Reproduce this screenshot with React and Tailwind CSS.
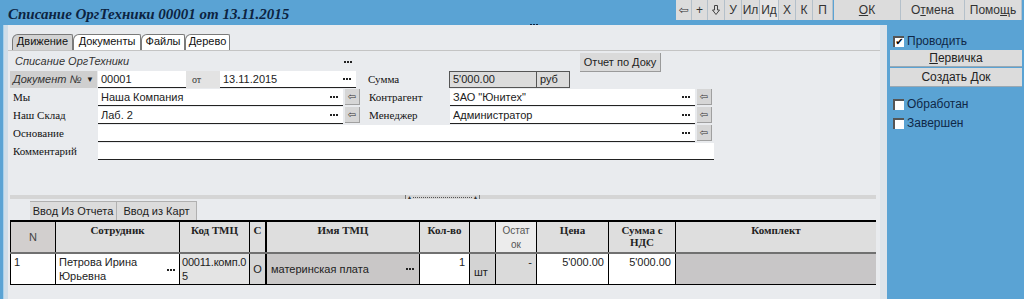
import React from "react";

function Dots() {
  return (
    <span className="inline-flex gap-[1px] items-center">
      <span className="w-[2px] h-[2px] bg-[#222]" />
      <span className="w-[2px] h-[2px] bg-[#222]" />
      <span className="w-[2px] h-[2px] bg-[#222]" />
    </span>
  );
}

function ArrBtn() {
  return (
    <div className="w-[15px] h-[16px] bg-[#d6d6d6] border-r border-b border-[#a0a0a0] flex items-center justify-center text-[10px] leading-none text-[#333] font-['DejaVu_Sans',sans-serif]">
      ⇦
    </div>
  );
}

function Field({ className = "", text = "", dots = false }) {
  return (
    <div className={`h-[17px] bg-white border-b border-[#222] flex items-center pl-[3px] pr-[5px] text-[11px] text-[#222] ${className}`}>
      <span className="flex-1 truncate">{text}</span>
      {dots && <Dots />}
    </div>
  );
}

function Label({ children, className = "" }) {
  return (
    <div className={`h-[17px] flex items-center pl-[3px] font-['Liberation_Serif','Times_New_Roman',serif] text-[11px] text-[#111] ${className}`}>
      {children}
    </div>
  );
}

function Tab({ children, active, className = "" }) {
  return (
    <div
      className={`h-[16px] flex items-end justify-center pb-[1px] text-[11px] text-[#111] border-l border-t border-r border-[#7a7a7a] rounded-tl-[6px] rounded-tr-[2px] ${active ? "bg-[#d3d3d3]" : "bg-white"} ${className}`}
    >
      {children}
    </div>
  );
}

function Check({ checked, label }) {
  return (
    <div className="flex items-center h-[14px] pl-[6px]">
      <div className="w-[11px] h-[11px] bg-white border-l-2 border-t-2 border-[#555] flex items-center justify-center text-[10px] leading-none text-black font-['DejaVu_Sans',sans-serif]">
        {checked ? "✔" : ""}
      </div>
      <span className="ml-[3px] text-[12px] text-[#0f2848]">{label}</span>
    </div>
  );
}

function TB({ children, className = "" }) {
  return (
    <div className={`h-[20px] bg-[#dcdcdc] border-r border-[#b4c0ca] flex items-center justify-center text-[12px] text-[#333] ${className}`}>
      {children}
    </div>
  );
}

function HCell({ children, className = "" }) {
  return (
    <div className={`h-[30px] border-r border-black flex justify-center pt-[2px] font-['Liberation_Serif','Times_New_Roman',serif] font-bold text-[11px] leading-[12px] text-[#222] text-center ${className}`}>
      {children}
    </div>
  );
}

function DCell({ children, className = "" }) {
  return (
    <div className={`h-[30px] border-r border-black text-[11px] leading-[14px] text-[#222] ${className}`}>
      {children}
    </div>
  );
}

export default function App() {
  return (
    <div className="w-[1024px] h-[299px] bg-[#5aa3d4] flex flex-col overflow-hidden font-['Liberation_Sans',Arial,sans-serif]">
      {/* Title bar */}
      <div className="h-[25px] flex items-start">
        <div className="w-[530px] pl-[8px] pt-[3px] font-['Liberation_Serif','Times_New_Roman',serif] font-bold italic text-[15px] text-[#0c2341] whitespace-nowrap">
          Списание ОргТехники 00001 от 13.11.2015
        </div>
        <div className="pt-[9px] w-[140px]">
          <span className="inline-flex gap-[1px]">
            <span className="w-[2px] h-[2px] bg-[#0c2341]" />
            <span className="w-[2px] h-[2px] bg-[#0c2341]" />
            <span className="w-[2px] h-[2px] bg-[#0c2341]" />
          </span>
        </div>
        <div className="ml-[6px] flex">
          <TB className="w-[16px] text-[10px] font-['DejaVu_Sans',sans-serif]">⇦</TB>
          <TB className="w-[16px]">+</TB>
          <TB className="w-[17px]">
            <svg width="8" height="10" viewBox="0 0 8 10">
              <path d="M2.5 0.5 H5.5 V5 H7.5 L4 9.5 L0.5 5 H2.5 Z" fill="none" stroke="#444" strokeWidth="1" />
            </svg>
          </TB>
          <TB className="w-[17px]">У</TB>
          <TB className="w-[18px]">Ил</TB>
          <TB className="w-[19px] bg-[#e6e6e6]">Ид</TB>
          <TB className="w-[17px]">Х</TB>
          <TB className="w-[17px]">К</TB>
          <TB className="w-[20px]">П</TB>
          <TB className="w-[67px] ml-[1px]"><span><span className="underline">О</span>К</span></TB>
          <TB className="w-[64px]"><span>О<span className="underline">т</span>мена</span></TB>
          <TB className="w-[57px]"><span>Помо<span className="underline">щ</span>ь</span></TB>
        </div>
      </div>

      <div className="flex flex-1">
        {/* left edge */}
        <div className="w-[8px] flex">
          <div className="w-[3px]" />
          <div className="w-[1px] bg-[#a8d0ea]" />
          <div className="flex-1 bg-[#cfdde8]" />
        </div>

        {/* main panel */}
        <div className="w-[872px] bg-[#e9ebee] flex flex-col">
          {/* tabs */}
          <div className="mt-[9px] flex pl-[4px] border-b border-[#c4c4c4] h-[17px]">
            <Tab active className="w-[61px]">Движение</Tab>
            <Tab className="w-[68px]">Документы</Tab>
            <Tab className="w-[44px]">Файлы</Tab>
            <Tab className="w-[45px]">Дерево</Tab>
          </div>

          {/* form */}
          <div className="pl-[2px] flex flex-col">
            {/* row 1 */}
            <div className="mt-[2px] h-[18px] flex items-start">
              <div className="w-[347px] h-[17px] flex items-center pl-[5px] pr-[5px] text-[11px] italic text-[#333]">
                <span className="flex-1">Списание ОргТехники</span>
                <Dots />
              </div>
              <div className="ml-[223px] w-[81px] h-[19px] bg-[#dadada] border-r border-b border-[#9a9a9a] flex items-center justify-center text-[11px] text-[#222]">
                Отчет по Доку
              </div>
            </div>
            {/* row 2 */}
            <div className="h-[18px] flex items-start">
              <div className="w-[87px] h-[17px] bg-[#cfcfcf] flex items-center pl-[3px] pr-[3px] text-[11px] italic text-[#333]">
                <span className="flex-1">Документ №</span>
                <span className="text-[8px] text-[#222]">▼</span>
              </div>
              <Field className="w-[88px] ml-[1px]" text="00001" />
              <div className="w-[34px] h-[17px] bg-[#e3e3e3] flex items-center pl-[6px] font-['Liberation_Serif',serif] text-[10px] text-[#333]">от</div>
              <Field className="w-[136px]" text="13.11.2015" dots />
              <Label className="w-[84px] ml-[9px]">Сумма</Label>
              <div className="w-[88px] h-[17px] bg-[#dcdcdc] border border-[#555] flex items-center pl-[3px] text-[11px] text-[#222]">5'000.00</div>
              <div className="w-[33px] h-[17px] bg-[#dcdcdc] border border-l-0 border-[#555] flex items-center pl-[3px] text-[11px] text-[#222]">руб</div>
            </div>
            {/* row 3 */}
            <div className="h-[18px] flex items-start">
              <Label className="w-[88px]">Мы</Label>
              <Field className="w-[245px]" text="Наша Компания" dots />
              <div className="ml-[2px]"><ArrBtn /></div>
              <Label className="w-[84px] ml-[6px]">Контрагент</Label>
              <Field className="w-[245px]" text='ЗАО "Юнитех"' dots />
              <div className="ml-[2px]"><ArrBtn /></div>
            </div>
            {/* row 4 */}
            <div className="h-[18px] flex items-start">
              <Label className="w-[88px]">Наш Склад</Label>
              <Field className="w-[245px]" text="Лаб. 2" dots />
              <div className="ml-[2px]"><ArrBtn /></div>
              <Label className="w-[84px] ml-[6px]">Менеджер</Label>
              <Field className="w-[245px]" text="Администратор" dots />
              <div className="ml-[2px]"><ArrBtn /></div>
            </div>
            {/* row 5 */}
            <div className="h-[18px] flex items-start">
              <Label className="w-[88px]">Основание</Label>
              <Field className="w-[597px]" dots />
              <div className="ml-[2px]"><ArrBtn /></div>
            </div>
            {/* row 6 */}
            <div className="h-[18px] flex items-start">
              <Label className="w-[88px]">Комментарий</Label>
              <Field className="w-[616px]" />
            </div>
          </div>

          {/* splitter */}
          <div className="mt-[34px] ml-[2px] w-[866px] h-[4px] bg-[#d5d5d5] flex">
            <div className="ml-[395px] w-[75px] h-[4px] border-l border-r border-[#777] flex items-center justify-between px-[1px]">
              <span className="text-[5px] leading-none text-[#333]">▲</span>
              <span className="flex-1 mx-[1px] border-b border-dotted border-[#555]" />
              <span className="text-[5px] leading-none text-[#333]">▲</span>
            </div>
          </div>

          {/* buttons */}
          <div className="mt-[2px] ml-[22px] flex h-[19px]">
            <div className="w-[87px] h-[19px] bg-[#dcdcdc] border-t border-r border-[#b0b0b0] flex items-center justify-center text-[11px] text-[#222]">Ввод Из Отчета</div>
            <div className="w-[80px] h-[19px] bg-[#dcdcdc] border-t border-r border-[#b0b0b0] flex items-center justify-center text-[11px] text-[#222]">Ввод из Карт</div>
          </div>

          {/* table */}
          <div className="ml-[2px] w-[866px] border-t-2 border-black">
            <div className="grid grid-cols-[46px_124px_70px_17px_153px_50px_26px_41px_72px_67px_200px] bg-[#dedede] border-b-2 border-[#707070]">
              <div className="h-[30px] border-l border-r border-black bg-[#d2cfce] flex items-center justify-center text-[11px] text-[#444]">N</div>
              <HCell>Сотрудник</HCell>
              <HCell>Код ТМЦ</HCell>
              <HCell className="border-r-2">С</HCell>
              <HCell>Имя ТМЦ</HCell>
              <HCell>Кол-во</HCell>
              <HCell />
              <div className="h-[30px] border-r border-black bg-[#ececec] flex justify-center pt-[2px] text-[10px] leading-[14px] text-[#555] text-center font-['Liberation_Sans',sans-serif]">Остат<br />ок</div>
              <HCell>Цена</HCell>
              <HCell>Сумма с<br />НДС</HCell>
              <HCell className="border-r-0">Комплект</HCell>
            </div>
            <div className="grid grid-cols-[46px_124px_70px_17px_153px_50px_26px_41px_72px_67px_200px] border-b border-black">
              <DCell className="border-l bg-white pl-[3px] pt-[1px]">1</DCell>
              <DCell className="bg-white pl-[3px] pt-[1px] flex">
                <span className="flex-1">Петрова Ирина<br />Юрьевна</span>
                <span className="pt-[5px] pr-[4px]"><Dots /></span>
              </DCell>
              <DCell className="bg-[#e4e4e4] pl-[2px] pt-[1px] whitespace-nowrap overflow-hidden text-[10.5px] tracking-[-0.2px]">00011.комп.0<br />5</DCell>
              <DCell className="bg-[#d6d6d6] flex items-center justify-center border-r-2">О</DCell>
              <DCell className="bg-[#c9c7c7] flex items-center pl-[4px] pr-[5px]">
                <span className="flex-1">материнская плата</span>
                <Dots />
              </DCell>
              <DCell className="bg-white text-right pr-[4px] pt-[1px]">1</DCell>
              <DCell className="bg-[#d3d3d3] flex items-end pl-[4px] pb-[5px]">шт</DCell>
              <DCell className="bg-[#dadada] text-right pr-[4px] pt-[1px]">-</DCell>
              <DCell className="bg-white text-right pr-[4px] pt-[1px]">5'000.00</DCell>
              <DCell className="bg-white text-right pr-[4px] pt-[1px]">5'000.00</DCell>
              <DCell className="bg-[#c8c6c7] border-r-0" />
            </div>
          </div>
        </div>

        {/* right strip */}
        <div className="w-[7px] bg-[#dde4ea]" />

        {/* sidebar */}
        <div className="flex-1 flex flex-col pt-[9px] pl-[0px] pr-[2px]">
          <Check checked label="Проводить" />
          <div className="mt-[2px] ml-[3px] h-[17px] bg-[#dcdcdc] border-b border-[#9aa8b2] flex items-center justify-center text-[12px] text-[#222]">
            <span><span className="underline">П</span>ервичка</span>
          </div>
          <div className="mt-[1px] ml-[3px] h-[19px] bg-[#dcdcdc] border-b border-[#9aa8b2] flex items-center justify-center text-[12px] text-[#222]">
            Создать Док
          </div>
          <div className="mt-[10px]"><Check label="Обработан" /></div>
          <div className="mt-[5px]"><Check label="Завершен" /></div>
        </div>
      </div>
    </div>
  );
}
